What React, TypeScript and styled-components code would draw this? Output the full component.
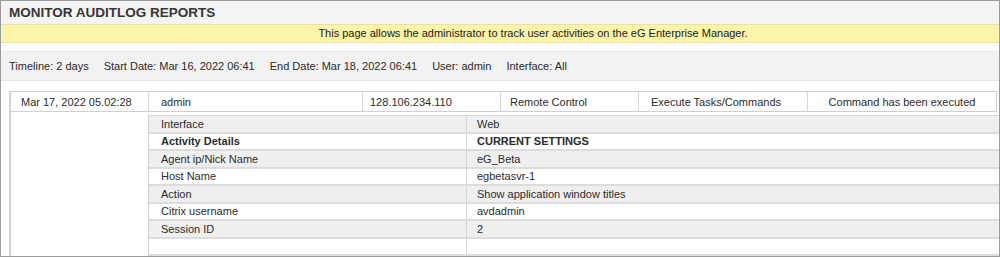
import styled, { createGlobalStyle } from "styled-components";

const GlobalStyle = createGlobalStyle`
    body {
        margin: 0;
        font-family: "Liberation Sans", Arial, sans-serif;
        color: #2b2b2b;
        background: #fff;
    }
`;

const Frame = styled.div`
    width: 1000px;
    height: 257px;
    box-sizing: border-box;
    border: 1px solid #9c9c9c;
    overflow: hidden;
    background: #fff;
`;

const TitleBar = styled.h1`
    margin: 0;
    height: 23px;
    line-height: 24px;
    padding-left: 8px;
    background: #f4f4f4;
    font-size: 13.5px;
    font-weight: bold;
    color: #363636;
`;

const Notice = styled.div`
    height: 17px;
    line-height: 17px;
    border-top: 1px solid #e9e1a6;
    border-bottom: 1px solid #e9e1a6;
    background: #fcf4a9;
    font-size: 11px;
    color: #222;
    text-align: center;
    padding-left: 66px;
`;

const FilterBar = styled.div`
    margin-top: 8px;
    height: 28px;
    border-top: 1px solid #e3e3e3;
    border-bottom: 1px solid #e3e3e3;
    background: #f2f2f2;
    display: flex;
    align-items: center;
    gap: 15px;
    padding-left: 8px;
    font-size: 11px;
`;

const FilterItem = styled.span``;

const Report = styled.div`
    margin: 10px 0 0 8px;
    height: 200px;
    border-left: 2px solid #d2d2d2;
`;

const SummaryRow = styled.div`
    margin-top: 1px;
    width: max-content;
    display: grid;
    grid-template-columns: 137px 214px 138px 138px 169px 189px;
    height: 21px;
    box-sizing: border-box;
    border-top: 1px solid #cfcfcf;
    border-bottom: 1px solid #cfcfcf;
    border-right: 1px solid #cfcfcf;
    font-size: 11px;
`;

const SummaryCell = styled.div<{ $pad: number; $center?: boolean }>`
    display: flex;
    align-items: center;
    justify-content: ${({ $center }) => ($center ? "center" : "flex-start")};
    padding-left: ${({ $pad }) => $pad}px;
    border-left: 1px solid #d6d6d6;
    white-space: nowrap;

    &:first-child {
        border-left: none;
    }
`;

const Details = styled.div`
    margin-top: 3px;
    display: grid;
    grid-template-columns: 137px 1fr;
`;

const DetailTable = styled.div`
    grid-column: 2;
    border-left: 1px solid #cfcfcf;
    border-top: 1px solid #d6d6d6;
    font-size: 11px;
`;

const DetailRow = styled.div<{ $shade?: boolean; $bold?: boolean }>`
    display: grid;
    grid-template-columns: 317px 1fr;
    height: 15.5px;
    border-bottom: 2px solid #dcdcdc;
    background: ${({ $shade }) => ($shade ? "#efefef" : "#fff")};
    font-weight: ${({ $bold }) => ($bold ? "bold" : "normal")};
`;

const DetailLabel = styled.div`
    padding-left: 12px;
    display: flex;
    align-items: center;
    white-space: nowrap;
`;

const DetailValue = styled.div`
    padding-left: 10px;
    border-left: 1px solid #d6d6d6;
    display: flex;
    align-items: center;
    white-space: nowrap;
`;

const summary = [
    { text: "Mar 17, 2022 05.02:28", pad: 10 },
    { text: "admin", pad: 12 },
    { text: "128.106.234.110", pad: 7 },
    { text: "Remote Control", pad: 9 },
    { text: "Execute Tasks/Commands", pad: 12 },
    { text: "Command has been executed", pad: 0, center: true },
];

const details = [
    { label: "Interface", value: "Web" },
    { label: "Activity Details", value: "CURRENT SETTINGS", bold: true },
    { label: "Agent ip/Nick Name", value: "eG_Beta" },
    { label: "Host Name", value: "egbetasvr-1" },
    { label: "Action", value: "Show application window titles" },
    { label: "Citrix username", value: "avdadmin" },
    { label: "Session ID", value: "2" },
    { label: "", value: "" },
];

export default function App() {
    return (
        <>
            <GlobalStyle />
            <Frame>
                <TitleBar>MONITOR AUDITLOG REPORTS</TitleBar>
                <Notice>
                    This page allows the administrator to track user activities on the eG Enterprise Manager.
                </Notice>
                <FilterBar>
                    <FilterItem>Timeline: 2 days</FilterItem>
                    <FilterItem>Start Date: Mar 16, 2022 06:41</FilterItem>
                    <FilterItem>End Date: Mar 18, 2022 06:41</FilterItem>
                    <FilterItem>User: admin</FilterItem>
                    <FilterItem>Interface: All</FilterItem>
                </FilterBar>
                <Report>
                    <SummaryRow>
                        {summary.map((c) => (
                            <SummaryCell key={c.text} $pad={c.pad} $center={c.center}>
                                {c.text}
                            </SummaryCell>
                        ))}
                    </SummaryRow>
                    <Details>
                        <DetailTable>
                            {details.map((d, i) => (
                                <DetailRow key={i} $shade={i % 2 === 0 && d.label !== ""} $bold={d.bold}>
                                    <DetailLabel>{d.label}</DetailLabel>
                                    <DetailValue>{d.value}</DetailValue>
                                </DetailRow>
                            ))}
                        </DetailTable>
                    </Details>
                </Report>
            </Frame>
        </>
    );
}
